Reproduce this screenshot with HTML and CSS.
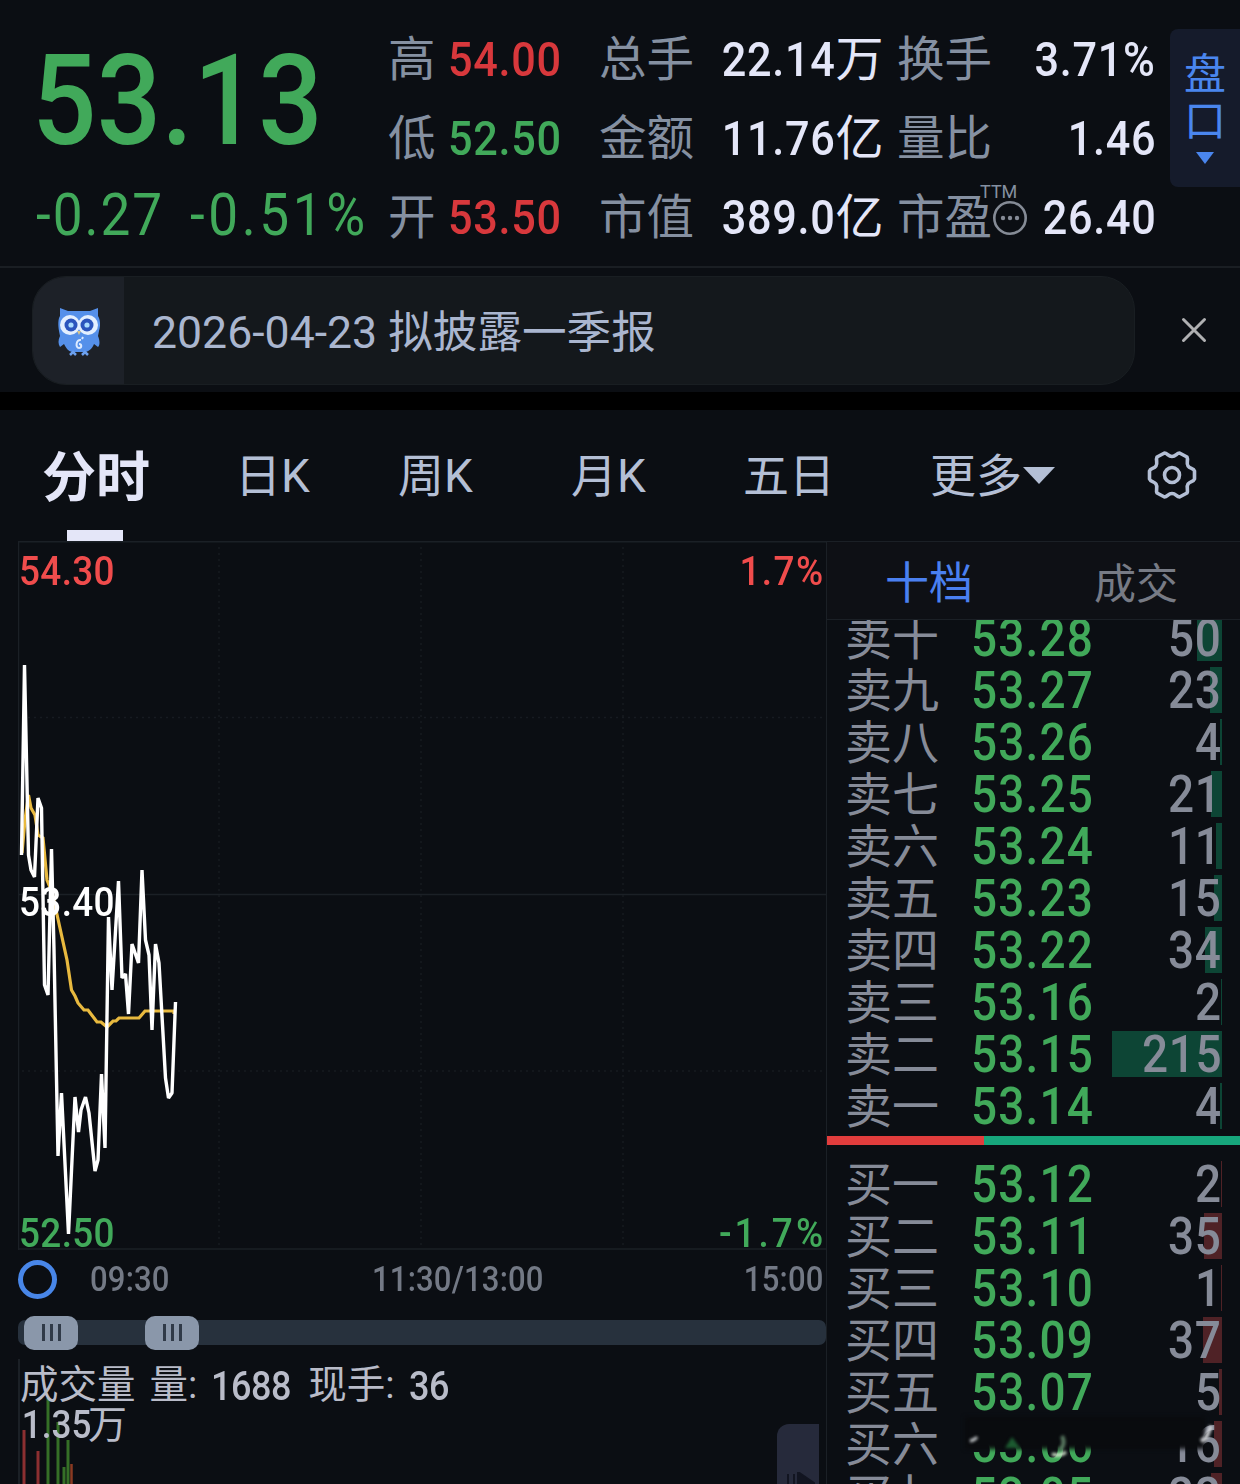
FILE: index.html
```html
<!DOCTYPE html>
<html lang="zh-CN">
<head>
  <meta charset="UTF-8">
  <title>分时</title>
  <meta name="viewport" content="width=device-width, initial-scale=1.0">
  <link rel="stylesheet" href="styles.css">
</head>
<body>

  <div id="quote">
    <div class="price-box">
      <div class="price din down">53.13</div>
      <div class="change down"><span class="din">-0.27</span><span class="din percent">-0.51%</span></div>
    </div>
    <div class="stats">
      <span class="label">高</span><span class="num up"><b class="din">54.00</b></span>
      <span class="label">总手</span><span class="num right"><b class="din">22.14</b>万</span>
      <span class="label last">换手</span><span class="num right"><b class="din">3.71%</b></span>
      <span class="label">低</span><span class="num down"><b class="din">52.50</b></span>
      <span class="label">金额</span><span class="num right"><b class="din">11.76</b>亿</span>
      <span class="label last">量比</span><span class="num right"><b class="din">1.46</b></span>
      <span class="label">开</span><span class="num up"><b class="din">53.50</b></span>
      <span class="label">市值</span><span class="num right"><b class="din">389.0</b>亿</span>
      <span class="label last pe">市盈
        <span class="ttm">TTM</span>
        <svg class="dots" width="36" height="36" viewBox="0 0 36 36"><circle cx="18" cy="18" r="15.7" fill="none" stroke="#858b96" stroke-width="2.6"/><g fill="#858b96"><circle cx="11" cy="18" r="2.2"/><circle cx="18" cy="18" r="2.2"/><circle cx="25" cy="18" r="2.2"/></g></svg>
      </span><span class="num right"><b class="din">26.40</b></span>
    </div>
    <div class="pankou"><span>盘</span><span>口</span><svg width="18" height="12" viewBox="0 0 18 12"><path d="M0 0h18l-9 12z" fill="#4a86ee"/></svg></div>
  </div>

  <div id="notice">
    <div class="notice-bar">
      <div class="notice-icon">
        <svg width="44" height="50" viewBox="0 0 44 50">
          <path d="M3 1l8 3h22l8-3v8c2 3 3 9 1 15l-1 5c2 5 2 9 0 11l-4-3c-2 5-5 7-8 8H15c-4-1-6-4-8-8l-4 3c-2-3-2-7 0-11l-1-5C1 18 1 12 3 9z" fill="#5590ea"/>
          <circle cx="13" cy="18" r="10" fill="#e3efff"/><circle cx="31" cy="18" r="10" fill="#e3efff"/>
          <circle cx="14" cy="18" r="6.5" fill="#2b55bd"/><circle cx="30" cy="18" r="6.5" fill="#2b55bd"/>
          <circle cx="14" cy="18" r="2.6" fill="#a9dcff"/><circle cx="30" cy="18" r="2.6" fill="#a9dcff"/>
          <path d="M20 24h4l-2 4z" fill="#d9c48a"/>
          <path d="M24 33c-5-1-6 8-2 8 3 0 3-4 0-4M25 32l1-2" fill="none" stroke="#dceaff" stroke-width="2"/>
          <path d="M13 48l3-3 3 3M25 48l3-3 3 3" fill="none" stroke="#6ca0ee" stroke-width="2.500"/>
        </svg>
      </div>
      <div class="notice-text">2026-04-23 拟披露一季报</div>
    </div>
    <svg class="close" width="26" height="26" viewBox="0 0 26 26"><path d="M2.500 2.500l21 21M23.500 2.500l-21 21" stroke="#b0b0b2" stroke-width="3" stroke-linecap="round"/></svg>
  </div>

  <div id="tabs">
    <span class="tab active">分时</span>
    <span class="tab">日K</span>
    <span class="tab">周K</span>
    <span class="tab">月K</span>
    <span class="tab">五日</span>
    <span class="tab more">更多<svg width="32" height="17" viewBox="0 0 32 17"><path d="M0 0h32L16 17z" fill="#b4bfd5"/></svg></span>
    <svg class="gear" width="50" height="50" viewBox="0 0 50 50" fill="none" stroke="#b4bfd5" stroke-width="3.600" stroke-linejoin="round"><path d="M17.500 3C20.500 3 21 6.500 25 6.500S29.500 3 32.500 3L40 7C41.500 10 39 13 41 16S46.500 18 47.500 21V29C46.500 32 43 31 41 34S41.500 40 40 43L32.500 47C29.500 47 29 43.500 25 43.500S20.500 47 17.500 47L10 43C8.500 40 11 37 9 34S3.500 32 2.500 29V21C3.500 18 7 19 9 16S8.500 10 10 7Z"/><circle cx="25" cy="25" r="7.500"/></svg>
  </div>

  <div id="main">
    <div class="left">
      <div class="chart">
        <svg width="809" height="709" viewBox="18 541 809 709" fill="none">
          <g stroke="#1b2026" stroke-width="1.500">
            <path d="M18 541.800H827M18 1249H827M18.500 541V1250M18 894.500H827"/>
            <path d="M219 547V1249M421 547V1249M623 547V1249M22 717.500H827M22 1071H827" stroke="#171b21" stroke-dasharray="2 4"/>
          </g>
          <polyline stroke="#e8b93f" stroke-width="3.200" points="22,853 25,820 28.500,795 31,808 35,815 38,835 43,838 47,880 52,892 56,910 67,960 71.500,990 75,996 78,1003 84,1010 88,1010 97,1022 101,1022 107,1027 113,1021 116,1021 119,1018 139,1018 145,1011 174,1011 174,1014"/>
          <polyline stroke="#fff" stroke-width="3.400" stroke-linejoin="bevel" points="21.500,855 24.500,665 28.500,855 31,870 34.500,877 38,798 41.500,808 44.500,985 48,995 51.500,849 54,950 58,1156 61.500,1093 68.500,1234 75,1097 78.500,1132 81,1110 85.500,1097 89,1113 95,1171 98,1160 101.500,1074 105,1148 108.500,917 112,990 118.500,881 122,978 125.500,974 128.500,1014 132,944 138.500,963 142,870 145.500,940 149,955 152,1030 155.500,944 159,963 165.500,1078 168.500,1098 172,1093 175.500,1002"/>
        </svg>
        <span class="axis din top-left up">54.30</span>
        <span class="axis din top-right up">1.7%</span>
        <span class="axis din middle">53.40</span>
        <span class="axis din bottom-left down">52.50</span>
        <span class="axis din bottom-right down">-1.7%</span>
      </div>
      <div class="times">
        <span class="ring"></span>
        <span class="din">09:30</span>
        <span class="din">11:30/13:00</span>
        <span class="din">15:00</span>
      </div>
      <div class="slider">
        <div class="handle"><i></i><i></i><i></i></div>
        <div class="handle"><i></i><i></i><i></i></div>
      </div>
      <div class="volume">
        <svg class="vol-bars" width="60" height="90" viewBox="18 1394 60 90">
          <path d="M24 1430v54M38 1451v33" stroke="#8c2f31" stroke-width="3"/>
          <path d="M48 1398v86M58 1422v62M64 1467v17M68 1440v44" stroke="#356f27" stroke-width="3"/>
          <path d="M71.500 1464v20" stroke="#8a3a22" stroke-width="2.500"/>
        </svg>
        <div class="vol-title"><span>成交量</span><span>量:</span><b class="din">1688</b><span>现手:</span><b class="din">36</b></div>
        <div class="vol-max"><b class="din">1.35</b>万</div>
        <div class="drawer"><svg width="30" height="18" viewBox="0 0 30 18"><path d="M3 2v16M9 2v16M13 0l16 11H13z" stroke="#121521" stroke-width="2" fill="#121521"/></svg></div>
      </div>
    </div>

    <div class="book">
      <div class="book-tabs"><span class="on">十档</span><span>成交</span></div>
      <div class="sells" id="sells"></div>
      <div class="ratio"><div></div></div>
      <div class="buys" id="buys"></div>
      <div class="smudge"></div>
      <svg class="glints" width="250" height="44" viewBox="968 1420 250 44">
        <path d="M970 1441q5-1 7-4" stroke="#c9cdd0" stroke-width="3" fill="none"/>
        <path d="M1052 1454q8 3 14-2" stroke="#d5e8cf" stroke-width="3" fill="none"/>
        <path d="M1062 1436q4 8-2 14" stroke="#5a7a62" stroke-width="4" fill="none"/>
        <path d="M1012 1437l8 11h-15z" fill="#1c5a30"/>
        <path d="M1211 1426l-5 12-5 3" stroke="#d0d2d6" stroke-width="4" fill="none"/>
      </svg>
    </div>
  </div>

  <script>
    const sells = [
      ['十', '53.28', 50], ['九', '53.27', 23], ['八', '53.26', 4], ['七', '53.25', 21], ['六', '53.24', 11],
      ['五', '53.23', 15], ['四', '53.22', 34], ['三', '53.16', 2], ['二', '53.15', 215], ['一', '53.14', 4]
    ];
    const buys = [
      ['一', '53.12', 2], ['二', '53.11', 35], ['三', '53.10', 1], ['四', '53.09', 37],
      ['五', '53.07', 5], ['六', '53.06', 16], ['七', '53.05', 22]
    ];

    function fill(id, side, rows) {
      document.getElementById(id).innerHTML = rows.map(([n, price, vol]) => `
        <div class="row">
          <span class="level">${side}${n}</span>
          <span class="row-price din">${price}</span>
          <span class="row-vol"><span class="bar" style="width:${Math.max(1.5, vol * 0.51)}px"></span><span class="qty din">${vol}</span></span>
        </div>`).join('');
    }

    fill('sells', '卖', sells);
    fill('buys', '买', buys);
  </script>

</body>
</html>
```
FILE: styles.css
```css
* {
  margin: 0;
  box-sizing: border-box;
}

body {
  width: 1240px;
  height: 1484px;
  overflow: hidden;
  background-color: #0b0e13;
  color: #e4e6f8;
  font-family: Roboto, "Noto Sans CJK SC", sans-serif;
}

i {
  font-style: normal;
}

/* narrow digits */
.din {
  display: inline-block;
  transform: scaleX(0.9);
  transform-origin: left center;
  font-weight: 500;
  letter-spacing: 0.8px;
  white-space: nowrap;
}

.up {
  color: #d8383c;
}

.down {
  color: #41a95a;
}

/* Quote */
#quote {
  display: flex;
  height: 268px;
  border-bottom: 2px solid #1a1e23;
}

.price-box {
  width: 388px;
  padding: 26px 0 0 32px;
}

.price {
  font-size: 126px;
  line-height: 150px;
  letter-spacing: 0.4px;
}

.change {
  display: flex;
  margin: 9px 0 0 4px;
  font-size: 59px;
  line-height: 60px;
}

.change .din {
  width: 154px;
  font-weight: 400;
  letter-spacing: 2.2px;
}

.change .percent {
  letter-spacing: 4px;
}

.stats {
  display: grid;
  grid-template-columns: 60px 151px 110px 171px 131px 145px;
  grid-auto-rows: 79px;
  align-items: center;
  padding-top: 20px;
}

.label {
  font-size: 47.5px;
  line-height: 82px;
  color: #8590a1;
  white-space: nowrap;
}

.label.last {
  padding-left: 17px;
}

.num {
  font-size: 48px;
  line-height: 79px;
  white-space: nowrap;
}

.num.right {
  text-align: right;
}

.num.right .din {
  transform-origin: right center;
}

.pe {
  position: relative;
}

.ttm {
  position: absolute;
  left: 100px;
  top: 5px;
  font-size: 18px;
  line-height: 20px;
}

.dots {
  position: absolute;
  left: 112px;
  top: 23px;
}

.pankou {
  display: flex;
  flex-direction: column;
  align-items: center;
  width: 70px;
  height: 158px;
  margin: 29px 0 0 14px;
  padding-top: 22px;
  border-radius: 8px 0 0 8px;
  background-color: #151b2b;
  color: #4a86ee;
  font-size: 42px;
  line-height: 47px;
}

.pankou svg {
  margin-top: 7px;
}

/* Notice */
#notice {
  display: flex;
  align-items: center;
  height: 142px;
  padding: 0 33px 9px 32px;
  border-bottom: 18px solid #000;
  justify-content: space-between;
}

.notice-bar {
  display: flex;
  width: 1103px;
  height: 109px;
  margin-top: 9px;
  overflow: hidden;
  border: 1px solid #191e22;
  border-radius: 34px;
  background-color: #14181c;
}

.notice-icon {
  width: 91px;
  padding: 30px 0 0 24px;
  background-color: #1d2128;
}

.notice-text {
  padding-left: 28px;
  font-size: 44.6px;
  line-height: 113px;
  color: #aab6cf;
}

.close {
  margin-top: 9px;
}

/* Tabs */
#tabs {
  display: flex;
  height: 131px;
  padding-left: 42px;
  color: #b4bfd5;
}

.tab {
  font-size: 46px;
  line-height: 132px;
  white-space: nowrap;
}

.tab.active {
  position: relative;
  width: 193px;
  font-size: 54px;
  line-height: 138px;
  font-weight: 700;
  color: #e4e6f8;
}

.tab.active::after {
  content: "";
  position: absolute;
  left: 25px;
  top: 120px;
  width: 56px;
  height: 11px;
  background-color: #e4e6f8;
}

.tab:nth-child(2) {
  width: 163px;
}

.tab:nth-child(3) {
  width: 173px;
}

.tab:nth-child(4) {
  width: 172px;
}

.tab:nth-child(5) {
  width: 187px;
}

.more {
  width: 217px;
}

.more svg {
  margin-left: 1px;
  vertical-align: 8px;
}

.gear {
  margin-top: 40px;
}

/* Chart */
#main {
  display: flex;
}

.left {
  width: 826px;
  height: 943px;
  padding-left: 18px;
}

.chart {
  position: relative;
  height: 709px;
}

.chart > svg {
  display: block;
}

.axis {
  position: absolute;
  font-size: 41px;
  line-height: 44px;
  letter-spacing: 0.4px;
  color: #fff;
}

.axis.up {
  color: #f04c4c;
}

.axis.down {
  color: #41a95a;
}

.top-left {
  left: 1px;
  top: 8px;
}

.top-right {
  right: 1px;
  top: 8px;
  letter-spacing: 1.6px;
  transform-origin: right center;
}

.middle {
  left: 1px;
  top: 339px;
}

.bottom-left {
  left: 1px;
  bottom: -5px;
}

.bottom-right {
  right: 0;
  bottom: -5px;
  letter-spacing: 3.4px;
  transform-origin: right center;
}

.times {
  display: flex;
  align-items: center;
  height: 58px;
  padding-right: 2px;
  font-size: 34.5px;
  color: #737985;
}

.times .din {
  letter-spacing: 0.2px;
}

.times span:nth-child(2) {
  width: 282px;
  margin-left: 33px;
}

.times span:nth-child(4) {
  margin-left: auto;
  transform-origin: right center;
}

.ring {
  width: 39px;
  height: 39px;
  border: 5.5px solid #4886e8;
  border-radius: 50%;
}

.slider {
  display: flex;
  align-items: center;
  height: 25px;
  margin-top: 12px;
  padding-left: 6px;
  gap: 67px;
  border-radius: 7px;
  background-color: #27313d;
}

.handle {
  display: flex;
  justify-content: center;
  align-items: center;
  gap: 5px;
  width: 54px;
  height: 34px;
  margin: -6px 0;
  border-radius: 10px;
  background-color: #8a97aa;
}

.handle i {
  width: 3px;
  height: 17px;
  background-color: #303a48;
}

.volume {
  position: relative;
  height: 125px;
  margin-top: 14px;
  border-left: 2px solid #1b2026;
  color: #b9bcc9;
}

.vol-bars {
  position: absolute;
  left: -2px;
  bottom: 0;
}

.vol-title {
  display: flex;
  position: relative;
  height: 43px;
  font-size: 38.5px;
  line-height: 51px;
  white-space: nowrap;
}

.vol-title span + span {
  margin-left: 14px;
}

.vol-title .din {
  width: 80px;
  margin: 0 17px 0 14px;
  font-size: 40px;
  line-height: 55px;
  letter-spacing: -0.5px;
}

.vol-max {
  position: relative;
  font-size: 39px;
  line-height: 46px;
}

.vol-max .din {
  width: 68px;
  padding-left: 2px;
  letter-spacing: 0;
}

.drawer {
  position: absolute;
  right: 7px;
  bottom: 0;
  width: 42px;
  height: 60px;
  padding: 48px 0 0 8px;
  overflow: hidden;
  border-radius: 12px 0 0 0;
  background-color: #262a3b;
}

/* Order book */
.book {
  position: relative;
  width: 414px;
  height: 943px;
  overflow: hidden;
  border-left: 1px solid #1b2026;
}

.book-tabs {
  display: flex;
  justify-content: space-between;
  height: 79px;
  padding: 0 62px 0 58px;
  border-top: 1px solid #1b2026;
  border-bottom: 1px solid #1b2026;
  background-color: #0e1015;
  font-size: 42px;
  line-height: 85px;
  color: #777b85;
}

.book-tabs .on {
  font-size: 44px;
  color: #4a80f0;
}

.sells {
  display: flex;
  flex-direction: column;
  justify-content: flex-end;
  height: 512px;
  overflow: hidden;
}

.row {
  display: flex;
  flex: none;
  height: 52px;
  padding: 0 18px;
  line-height: 54px;
  color: #868b98;
}

.level {
  width: 126px;
  font-size: 47px;
}

.row-price {
  width: 139px;
  line-height: 54px;
  font-size: 51px;
  letter-spacing: 1.3px;
  color: #41a95a;
}

.row-vol {
  position: relative;
  flex: 1;
  height: 46px;
  margin-top: 3px;
  line-height: 48px;
  text-align: right;
  font-size: 51px;
}

.bar {
  position: absolute;
  right: 0;
  top: 0;
  height: 46px;
  background-color: #0d4535;
}

.buys .bar {
  background-color: #4f2226;
}

.qty {
  position: relative;
  transform-origin: right center;
}

.ratio {
  height: 9px;
  margin: 4px 0 13px -1px;
  background-color: #17a67c;
}

.ratio div {
  width: 158px;
  height: 9px;
  background-color: #e23d3d;
}

.smudge {
  position: absolute;
  left: 138px;
  bottom: 35px;
  width: 240px;
  height: 32px;
  background-color: #090b0e;
  filter: blur(2px);
}

.glints {
  position: absolute;
  left: 141px;
  bottom: 20px;
  filter: blur(1.5px);
}
```
